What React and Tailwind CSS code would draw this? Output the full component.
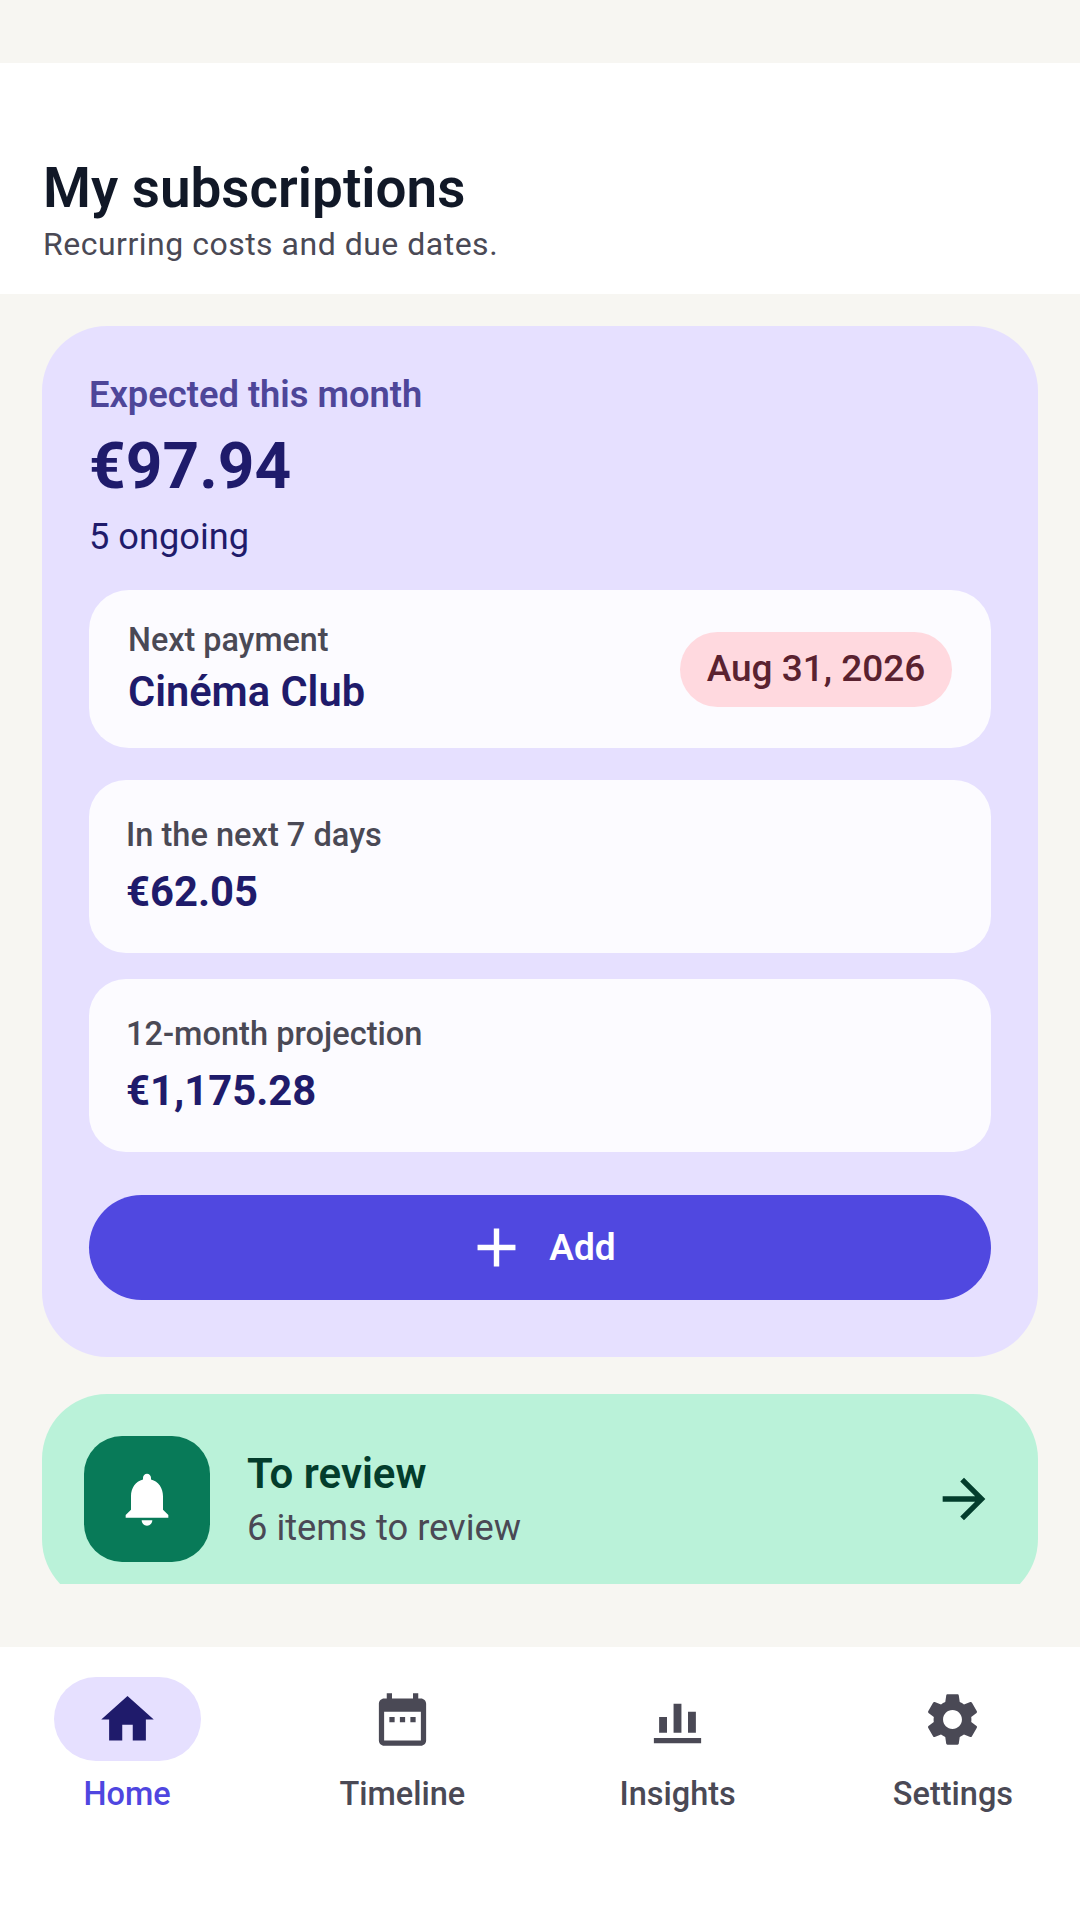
function InfoCard({ label, value }) {
    return (
        <div className="h-[173px] rounded-[37px] bg-[#fcfbff] pl-[37px] pt-[35px]">
            <div className="text-[32.6px] leading-[40px] font-medium text-[#4a4955]">{label}</div>
            <div className="mt-[12px] text-[41.8px] leading-[50px] font-bold text-[#1f1b6b]">{value}</div>
        </div>
    );
}

function NavItem({ label, active, children }) {
    return (
        <div className="flex w-[250px] flex-col items-center">
            <div className={`flex h-[84px] w-[147px] items-center justify-center rounded-[42px] ${active ? "bg-[#e6e0ff]" : ""}`}>
                {children}
            </div>
            <div className={`mt-[12px] text-[32.5px] leading-[42px] font-medium ${active ? "text-[#4f46e0]" : "text-[#4a4955]"}`}>
                {label}
            </div>
        </div>
    );
}

function Icon({ size = 63, color, d }) {
    return (
        <svg width={size} height={size} viewBox="0 0 24 24" fill={color}>
            <path d={d} />
        </svg>
    );
}

export default function App() {
    return (
        <div className="flex h-[1920px] w-[1080px] flex-col overflow-hidden bg-[#f7f6f2] font-['Roboto',sans-serif]">
            <div className="mt-[63px] h-[231px] bg-white pl-[43px] pt-[93px]">
                <div className="text-[54.8px] leading-[64px] font-semibold text-[#111827]">My subscriptions</div>
                <div className="mt-[4px] text-[32px] leading-[40px] tracking-[0.5px] text-[#4a4955]">Recurring costs and due dates.</div>
            </div>

            <div className="h-[1290px] overflow-hidden px-[42px] pt-[32px]">
                <div className="h-[1031px] rounded-[65px] bg-[#e6e0ff] px-[47px] pt-[47px]">
                    <div className="text-[36.3px] leading-[44px] font-semibold text-[#4e4699]">Expected this month</div>
                    <div className="mt-[14px] text-[64px] leading-[72px] font-bold text-[#1f1b6b]">€97.94</div>
                    <div className="mt-[12px] text-[36.2px] leading-[44px] text-[#1f1b6b]">5 ongoing</div>

                    <div className="mt-[31px] flex h-[158px] items-center justify-between rounded-[40px] bg-[#fcfbff] pl-[39px] pr-[39px]">
                        <div className="pb-[2px]">
                            <div className="text-[32.3px] leading-[40px] font-medium text-[#4a4955]">Next payment</div>
                            <div className="mt-[7px] text-[41.6px] leading-[50px] font-semibold text-[#1f1b6b]">Cinéma Club</div>
                        </div>
                        <div className="flex h-[75px] w-[272px] items-center justify-center rounded-[38px] bg-[#ffd9df] text-[37px] font-medium text-[#5a2230]">
                            Aug 31, 2026
                        </div>
                    </div>

                    <div className="mt-[32px]">
                        <InfoCard label="In the next 7 days" value="€62.05" />
                    </div>
                    <div className="mt-[26px]">
                        <InfoCard label="12-month projection" value="€1,175.28" />
                    </div>

                    <div className="mt-[43px] flex h-[105px] items-center justify-center gap-[20px] rounded-[53px] bg-[#5048e0] text-[37px] font-semibold text-white">
                        <Icon size={65} color="white" d="M19 13h-6v6h-2v-6H5v-2h6V5h2v6h6v2z" />
                        <span>Add</span>
                    </div>
                </div>

                <div className="mt-[37px] flex h-[210px] items-center rounded-[65px] bg-[#baf2d9] px-[42px]">
                    <div className="flex h-[126px] w-[126px] items-center justify-center rounded-[38px] bg-[#087a58]">
                        <Icon size={64} color="white" d="M12 22c1.1 0 2-.9 2-2h-4c0 1.1.89 2 2 2zm6-6v-5c0-3.07-1.64-5.64-4.5-6.32V4c0-.83-.67-1.5-1.5-1.5s-1.5.67-1.5 1.5v.68C7.63 5.36 6 7.92 6 11v5l-2 2v1h16v-1l-2-2z" />
                    </div>
                    <div className="ml-[37px] flex-1">
                        <div className="text-[42px] leading-[50px] font-semibold text-[#033d2c]">To review</div>
                        <div className="mt-[7px] text-[36.3px] leading-[44px] text-[#4a4955]">6 items to review</div>
                    </div>
                    <Icon size={64} color="#033d2c" d="M12 4l-1.41 1.41L16.17 11H4v2h12.17l-5.58 5.59L12 20l8-8z" />
                </div>
            </div>

            <div className="mt-[63px] flex h-[273px] justify-between bg-white px-[2px] pt-[30px]">
                <NavItem label="Home" active>
                    <Icon color="#1f1b6b" d="M10 20v-6h4v6h5v-8h3L12 3 2 12h3v8z" />
                </NavItem>
                <NavItem label="Timeline">
                    <Icon color="#4a4955" d="M9 11H7v2h2v-2zm4 0h-2v2h2v-2zm4 0h-2v2h2v-2zm2-7h-1V2h-2v2H8V2H6v2H5c-1.1 0-2 .9-2 2v14c0 1.1.9 2 2 2h14c1.1 0 2-.9 2-2V6c0-1.1-.9-2-2-2zm0 16H5V9h14v11z" />
                </NavItem>
                <NavItem label="Insights">
                    <Icon color="#4a4955" d="M5 11h3v6H5zM10.5 6h3v11h-3zM16 9h3v8h-3zM3 19h18v2H3z" />
                </NavItem>
                <NavItem label="Settings">
                    <Icon color="#4a4955" d="M19.14 12.94c.04-.3.06-.61.06-.94 0-.32-.02-.64-.07-.94l2.03-1.58c.18-.14.23-.41.12-.61l-1.92-3.32c-.12-.22-.37-.29-.59-.22l-2.39.96c-.5-.38-1.03-.7-1.62-.94l-.36-2.54c-.04-.24-.24-.41-.48-.41h-3.84c-.24 0-.43.17-.47.41l-.36 2.54c-.59.24-1.13.57-1.62.94l-2.39-.96c-.22-.08-.47 0-.59.22L2.74 8.87c-.12.21-.08.47.12.61l2.03 1.58c-.05.3-.09.63-.09.94s.02.64.07.94l-2.03 1.58c-.18.14-.23.41-.12.61l1.92 3.32c.12.22.37.29.59.22l2.39-.96c.5.38 1.03.7 1.62.94l.36 2.54c.05.24.24.41.48.41h3.84c.24 0 .44-.17.47-.41l.36-2.54c.59-.24 1.13-.56 1.62-.94l2.39.96c.22.08.47 0 .59-.22l1.92-3.32c.12-.22.07-.47-.12-.61l-2.01-1.58zM12 15.6c-1.98 0-3.6-1.62-3.6-3.6s1.62-3.6 3.6-3.6 3.6 1.62 3.6 3.6-1.62 3.6-3.6 3.6z" />
                </NavItem>
            </div>
        </div>
    );
}
